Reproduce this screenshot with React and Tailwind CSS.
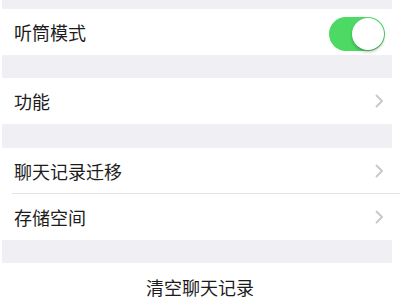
function Chevron() {
  return (
    <svg width="9" height="14" viewBox="0 0 9 14" fill="none" className="shrink-0">
      <path d="M1.5 1.5 L7 7 L1.5 12.5" stroke="#c7c7cc" strokeWidth="1.8" strokeLinecap="round" strokeLinejoin="round" />
    </svg>
  );
}

function Gap({ h }) {
  return <div className={`${h} bg-[#efeff4] mx-[2px] mr-[8px]`} />;
}

function Row({ label, children, divider }) {
  return (
    <div className="relative flex items-center justify-between h-[46px] pl-[14px] pr-[16px] bg-white">
      <span className="text-[18px] text-[#1c1c1c]">{label}</span>
      {children}
      {divider && <div className="absolute left-[12px] right-0 bottom-0 h-px bg-[#e4e4e7]" />}
    </div>
  );
}

export default function App() {
  return (
    <div
      className="w-[400px] h-[300px] overflow-hidden bg-white"
      style={{ fontFamily: '"Noto Sans CJK SC", "Noto Sans", sans-serif' }}
    >
      <div className="h-[9px] bg-[#efeff4] mx-[2px] mr-[8px]" />
      <Row label="听筒模式">
        <div className="relative w-[56px] h-[34px] rounded-full bg-[#4cd964] mt-[4px] mr-[-1px]">
          <div className="absolute right-[1px] top-[1px] w-[32px] h-[32px] rounded-full bg-white shadow-[0_2px_3px_rgba(0,0,0,0.25)]" />
        </div>
      </Row>
      <div className="h-[23px] bg-[#efeff4] mx-[2px] mr-[8px]" />
      <Row label="功能">
        <Chevron />
      </Row>
      <div className="h-[24px] bg-[#efeff4] mx-[2px] mr-[8px]" />
      <Row label="聊天记录迁移" divider>
        <Chevron />
      </Row>
      <Row label="存储空间">
        <Chevron />
      </Row>
      <div className="h-[23px] bg-[#efeff4] mx-[2px] mr-[8px]" />
      <div className="flex justify-center items-center h-[48px] bg-white">
        <span className="text-[18px] text-[#1c1c1c]">清空聊天记录</span>
      </div>
    </div>
  );
}
